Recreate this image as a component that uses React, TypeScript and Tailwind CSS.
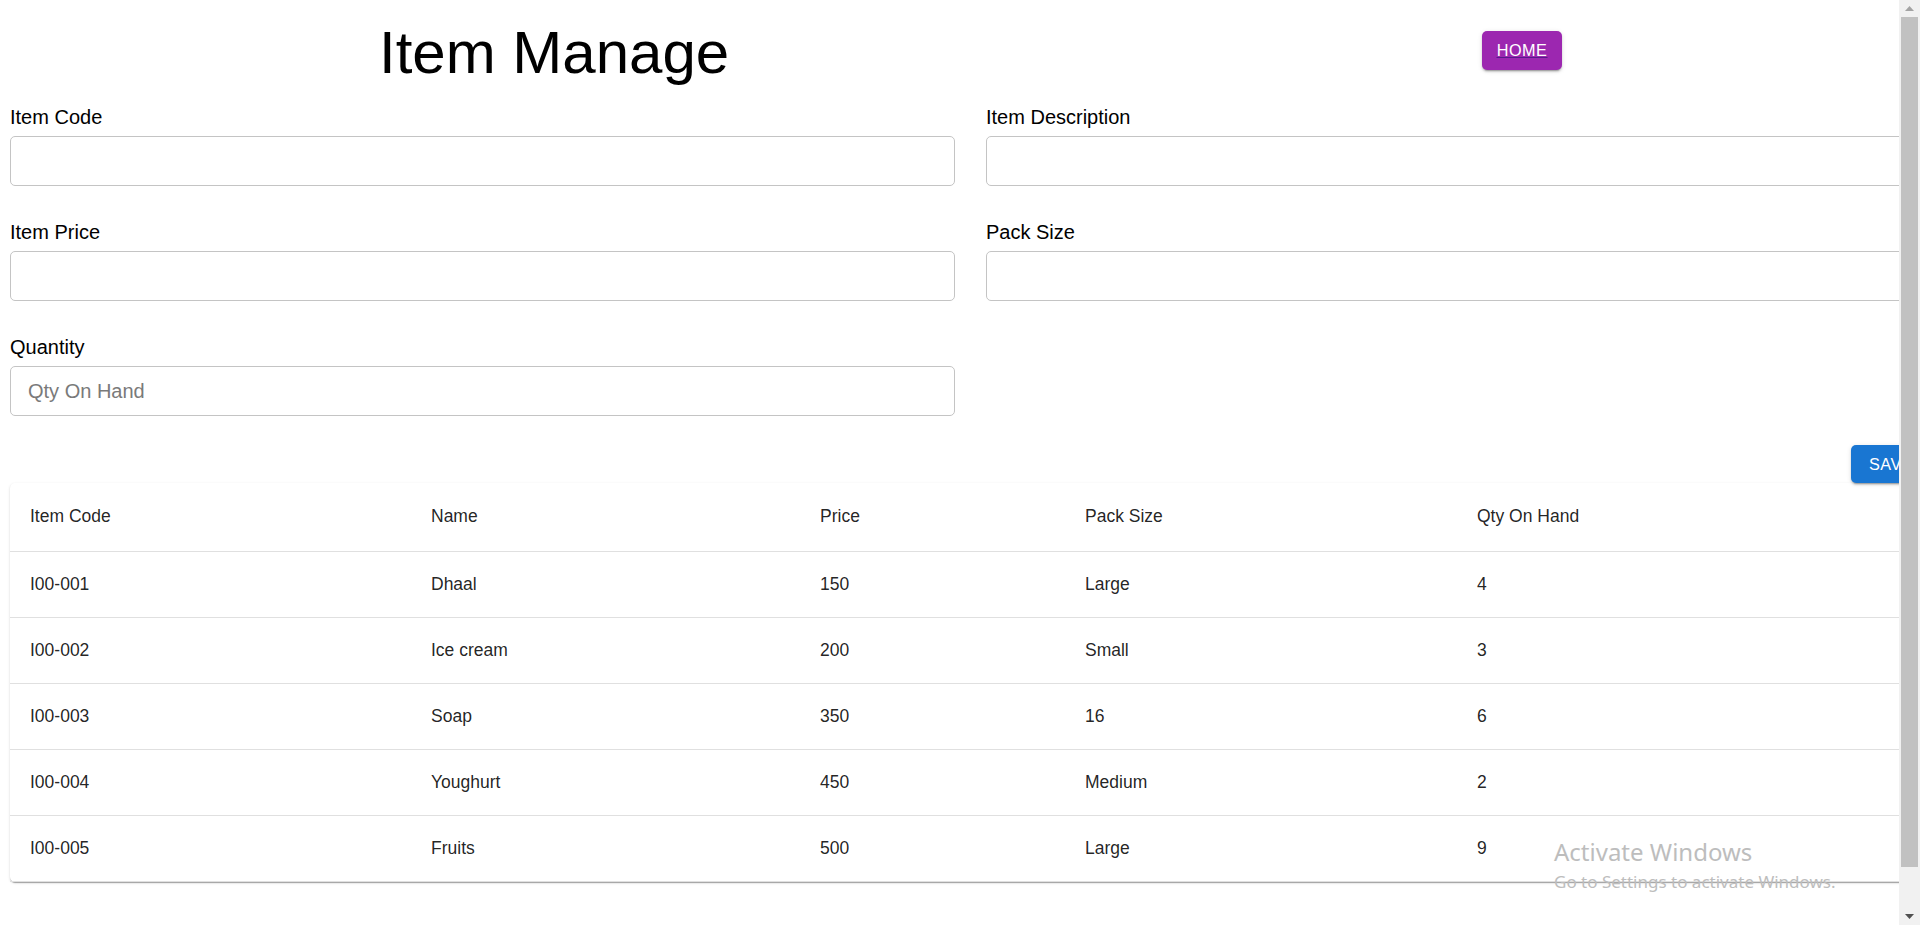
import React from "react";

const rows = [
  ["I00-001", "Dhaal", "150", "Large", "4"],
  ["I00-002", "Ice cream", "200", "Small", "3"],
  ["I00-003", "Soap", "350", "16", "6"],
  ["I00-004", "Youghurt", "450", "Medium", "2"],
  ["I00-005", "Fruits", "500", "Large", "9"],
];

const colW = ["w-[401px]", "w-[389px]", "w-[265px]", "w-[392px]", "w-[474px]"];

function Field({ label, placeholder, select }: { label: string; placeholder?: string; select?: boolean }) {
  return (
    <div className="flex flex-col">
      <label className="text-[20px] leading-[23px] text-black">{label}</label>
      <div className="relative mt-[7px] h-[50px] rounded-[5px] border border-[#c4c4c4] bg-white">
        <input
          className="h-full w-full bg-transparent px-[17px] text-[20px] text-[#212121] outline-none placeholder:text-[#7a7a7a]"
          placeholder={placeholder}
        />
        {select && (
          <svg className="absolute right-[9px] top-[10px] h-[30px] w-[30px]" viewBox="0 0 24 24" fill="#757575">
            <path d="M7 10l5 5 5-5z" />
          </svg>
        )}
      </div>
    </div>
  );
}

export default function App() {
  return (
    <div
      className="flex h-[925px] w-[1920px] overflow-hidden bg-white"
      style={{ fontFamily: '"Liberation Sans", Arial, sans-serif' }}
    >
      <div className="relative h-full w-[1899px] shrink-0 overflow-hidden">
        <div className="ml-[10px] w-[1921px]">
          <div className="flex h-[106px] items-start justify-between pl-[369px] pr-[369px]">
            <h1 className="mt-[19px] text-[60px] leading-[67px] font-normal text-black">Item Manage</h1>
            <a href="#" className="mt-[31px] text-white underline decoration-[#551a8b]">
              <span className="flex h-[39px] min-w-[80px] items-center justify-center rounded-[5px] bg-[#9c27b0] px-[12px] text-[16.25px] tracking-[0.46px] uppercase underline decoration-[#551a8b] shadow-[0px_3px_1px_-2px_rgba(0,0,0,0.2),0px_2px_2px_0px_rgba(0,0,0,0.14),0px_1px_5px_0px_rgba(0,0,0,0.12)]">
                HOME
              </span>
            </a>
          </div>

          <div className="grid grid-cols-2 gap-x-[31px] gap-y-[35px]">
            <Field label="Item Code" />
            <Field label="Item Description" />
            <Field label="Item Price" />
            <Field label="Pack Size" select />
            <Field label="Quantity" placeholder="Qty On Hand" />
          </div>

          <div className="mt-[29px] flex justify-end">
            <button className="flex h-[38px] min-w-[80px] items-center justify-center rounded-[5px] bg-[#1976d2] px-[12px] text-[16.25px] tracking-[0.46px] text-white uppercase shadow-[0px_3px_1px_-2px_rgba(0,0,0,0.2),0px_2px_2px_0px_rgba(0,0,0,0.14),0px_1px_5px_0px_rgba(0,0,0,0.12)]">
              SAVE
            </button>
          </div>

          <div className="rounded-[5px] bg-white shadow-[0px_2px_1px_-1px_rgba(0,0,0,0.2),0px_1px_1px_0px_rgba(0,0,0,0.14),0px_1px_3px_0px_rgba(0,0,0,0.12)]">
            <table className="w-full table-fixed border-collapse text-[17.5px] leading-[25px] text-[rgba(0,0,0,0.87)]">
              <thead>
                <tr>
                  {["Item Code", "Name", "Price", "Pack Size", "Qty On Hand"].map((h, i) => (
                    <th
                      key={h}
                      className={`${colW[i]} h-[68px] border-b border-[#e0e0e0] px-[20px] text-left font-normal`}
                    >
                      {h}
                    </th>
                  ))}
                </tr>
              </thead>
              <tbody>
                {rows.map((r) => (
                  <tr key={r[0]}>
                    {r.map((c, i) => (
                      <td key={i} className="h-[66px] border-b border-[#e0e0e0] px-[20px] text-left">
                        {c}
                      </td>
                    ))}
                  </tr>
                ))}
              </tbody>
            </table>
          </div>
          <div className="h-[60px]" />
        </div>

        <div
          className="pointer-events-none absolute left-[1554px] top-[837px] text-[#bdbdbd]"
          style={{ fontFamily: '"Noto Sans", "Open Sans", sans-serif' }}
        >
          <div className="text-[24px] leading-[30px]">Activate Windows</div>
          <div className="mt-[4px] text-[17px] leading-[22px]">Go to Settings to activate Windows.</div>
        </div>
      </div>

      <div className="flex h-full w-[21px] shrink-0 flex-col bg-[#f1f1f1]">
        <div className="flex h-[17px] items-center justify-center">
          <svg width="9" height="5" viewBox="0 0 9 5">
            <path d="M0 5 L4.5 0 L9 5 Z" fill="#a3a3a3" />
          </svg>
        </div>
        <div className="mx-[2px] h-[850px] bg-[#c1c1c1]" />
        <div className="flex-1" />
        <div className="flex h-[17px] items-center justify-center">
          <svg width="9" height="5" viewBox="0 0 9 5">
            <path d="M0 0 L4.5 5 L9 0 Z" fill="#505050" />
          </svg>
        </div>
      </div>
    </div>
  );
}
